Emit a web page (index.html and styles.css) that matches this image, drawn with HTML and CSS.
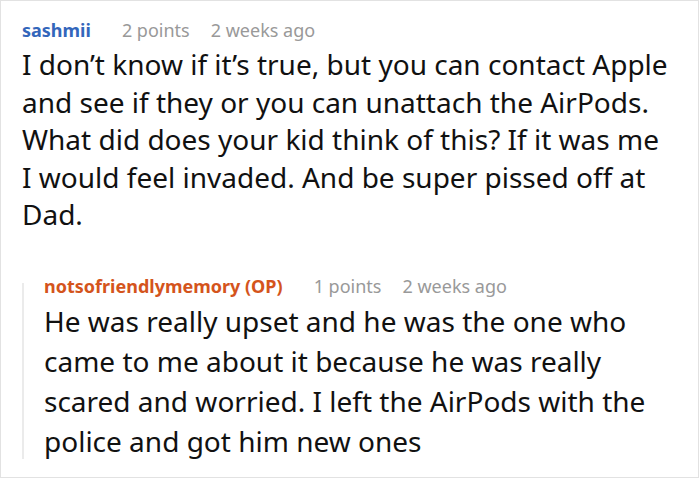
FILE: index.html
```html
<!DOCTYPE html>
<html lang="en">
<head>
    <meta charset="UTF-8">
    <title>Comments</title>
    <link rel="stylesheet" href="styles.css">
</head>
<body>
    <div class="thread">
        <div class="comment">
            <div class="meta">
                <span class="author">sashmii</span>
                <span class="points">2 points</span>
                <span class="time">2 weeks ago</span>
            </div>
            <p class="text">I don’t know if it’s true, but you can contact Apple and see if they or you can unattach the AirPods. What did does your kid think of this? If it was me<br>I would feel invaded. And be super pissed off at Dad.</p>

            <div class="replies">
                <div class="comment reply">
                    <div class="meta">
                        <span class="author op">notsofriendlymemory (OP)</span>
                        <span class="points">1 points</span>
                        <span class="time">2 weeks ago</span>
                    </div>
                    <p class="text">He was really upset and he was the one who came to me about it because he was really scared and worried. I left the AirPods with the police and got him new ones</p>
                </div>
            </div>
        </div>
    </div>
</body>
</html>
```

FILE: styles.css
```css
* {
    margin: 0;
    padding: 0;
    box-sizing: border-box;
}

body {
    font-family: "Noto Sans", sans-serif;
    background-color: #fff;
    color: #111;
}

.thread {
    width: 699px;
    height: 478px;
    border: 1px solid #e2e2e2;
    padding: 19px 11px 0 21px;
    overflow: hidden;
}

.meta {
    display: flex;
    align-items: baseline;
    font-size: 18px;
    line-height: 20px;
    color: #999;
    white-space: nowrap;
}

.author {
    font-weight: bold;
    color: #3366bb;
    margin-right: 31px;
}

.author.op {
    color: #d4541c;
}

.points {
    margin-right: 21px;
}

.text {
    font-size: 28px;
    line-height: 37.5px;
    margin-top: 6px;
}

/* replies */
.replies {
    position: relative;
    margin-top: 42px;
    padding-left: 22px;
}

.replies::before {
    content: "";
    position: absolute;
    left: 0;
    top: 7px;
    bottom: 2px;
    width: 2px;
    background-color: #ebebeb;
}

.reply .text {
    line-height: 40px;
    margin-top: 5px;
}
```
